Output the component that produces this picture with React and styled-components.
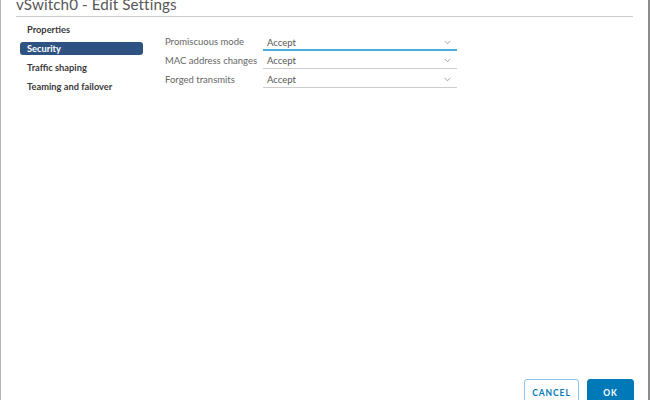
import React from 'react';
import styled, { createGlobalStyle } from 'styled-components';

const GlobalStyle = createGlobalStyle`
  html, body {
    margin: 0;
    padding: 0;
    background: #ffffff;
  }
  body {
    font-family: Lato, "Noto Sans", sans-serif;
  }
`;

const Dialog = styled.div`
  width: 650px;
  height: 400px;
  box-sizing: border-box;
  display: flex;
  flex-direction: column;
  overflow: hidden;
  background: #ffffff;
  border-left: 1px solid #b3b3b3;
  border-right: 2px solid #8c8c8c;
`;

const Header = styled.div`
  margin: 0 15px 0 15px;
  height: 16px;
  border-bottom: 1px solid #cccccc;
  flex-shrink: 0;
  overflow: visible;
`;

const Title = styled.h3`
  margin: -5px 0 0 0;
  font-size: 15.2px;
  line-height: 19px;
  font-weight: 400;
  color: #565656;
  letter-spacing: 0.1px;
`;

const Content = styled.div`
  flex: 1;
  display: flex;
  padding: 3px 0 0 19px;
`;

const Nav = styled.nav`
  width: 123px;
  display: flex;
  flex-direction: column;
  flex-shrink: 0;
`;

const NavItem = styled.div`
  height: 13px;
  margin: 3px 0;
  padding: 0 7px;
  border-radius: 3px;
  display: flex;
  align-items: center;
  font-size: 9.3px;
  font-weight: 700;
  color: ${p => (p.$active ? '#ffffff' : '#3a3a3a')};
  background: ${p => (p.$active ? '#2e5382' : 'transparent')};
`;

const Form = styled.div`
  margin: 11px 0 0 22px;
  display: flex;
  flex-direction: column;
`;

const Row = styled.div`
  display: grid;
  grid-template-columns: 98px 194px;
  align-items: end;
  height: 19px;
`;

const Label = styled.label`
  font-size: 9.5px;
  color: #666666;
  padding-bottom: 3px;
`;

const Select = styled.div`
  height: 15px;
  box-sizing: border-box;
  display: flex;
  align-items: center;
  justify-content: space-between;
  padding: 0 6px 1px 4px;
  border-bottom: ${p => (p.$focused ? '2px solid #49afd9' : '1px solid #cccccc')};
  margin-bottom: ${p => (p.$focused ? '-1px' : '0')};
  font-size: 9.5px;
  color: #565656;
`;

const Chevron = () => (
  <svg width="7" height="5" viewBox="0 0 7 5">
    <path d="M0.8 1 L3.5 3.8 L6.2 1" fill="none" stroke="#9a9a9a" strokeWidth="0.9" />
  </svg>
);

const Footer = styled.div`
  height: 21px;
  flex-shrink: 0;
  display: flex;
  justify-content: flex-end;
  align-items: flex-start;
  gap: 8px;
  padding-right: 14px;
`;

const Button = styled.button`
  height: 27px;
  box-sizing: border-box;
  padding: 0;
  width: ${p => p.$width}px;
  border-radius: 3px;
  border: 1px solid ${p => (p.$primary ? '#0079b8' : '#8cc4e3')};
  background: ${p => (p.$primary ? '#0079b8' : '#ffffff')};
  color: ${p => (p.$primary ? '#ffffff' : '#0079b8')};
  font-family: Lato, "Noto Sans", sans-serif;
  font-size: 8.5px;
  font-weight: 700;
  letter-spacing: 0.9px;
`;

const navItems = ['Properties', 'Security', 'Traffic shaping', 'Teaming and failover'];

const fields = [
  { label: 'Promiscuous mode', value: 'Accept', focused: true },
  { label: 'MAC address changes', value: 'Accept' },
  { label: 'Forged transmits', value: 'Accept' },
];

export default function App() {
  return (
    <>
      <GlobalStyle />
      <Dialog>
        <Header>
          <Title>vSwitch0 - Edit Settings</Title>
        </Header>
        <Content>
          <Nav>
            {navItems.map(item => (
              <NavItem key={item} $active={item === 'Security'}>{item}</NavItem>
            ))}
          </Nav>
          <Form>
            {fields.map(f => (
              <Row key={f.label}>
                <Label>{f.label}</Label>
                <Select $focused={f.focused}>
                  <span>{f.value}</span>
                  <Chevron />
                </Select>
              </Row>
            ))}
          </Form>
        </Content>
        <Footer>
          <Button $width={55}>CANCEL</Button>
          <Button $primary $width={47}>OK</Button>
        </Footer>
      </Dialog>
    </>
  );
}
